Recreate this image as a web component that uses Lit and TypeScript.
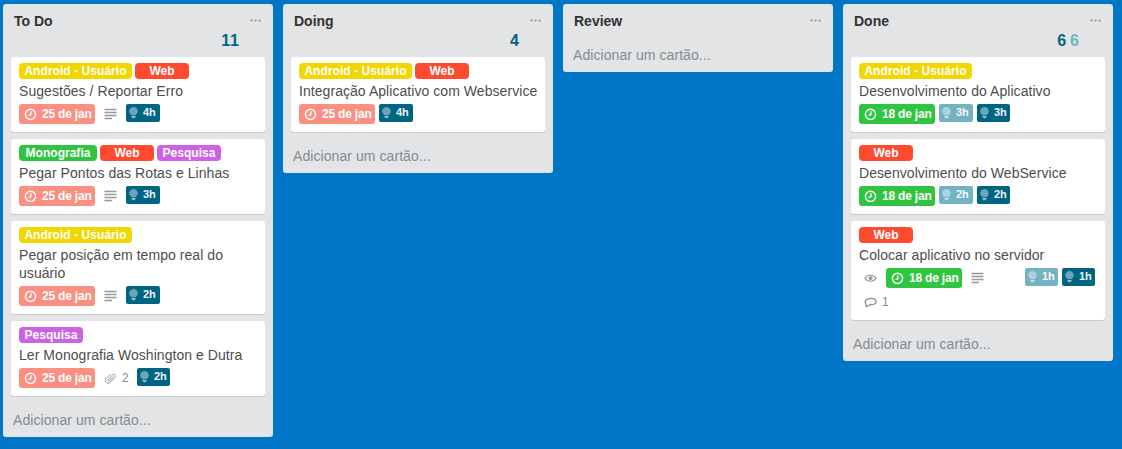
import { LitElement, html, css, svg, nothing } from "lit";
import { customElement, property } from "lit/decorators.js";

type Badge = { kind: "due" | "done" | "desc" | "eye" | "clip" | "comment" | "est" | "spent"; text?: string; push?: boolean };
type Card = { labels: string[]; title: string; badges: Badge[]; more?: Badge[] };
type List = { name: string; spent?: string; est?: string; cards: Card[] };

const LABELS: Record<string, string> = {
  "Android - Usuário": "android",
  Web: "web",
  Monografia: "mono",
  Pesquisa: "pesq",
};

const due: Badge = { kind: "due", text: "25 de jan" };
const done: Badge = { kind: "done", text: "18 de jan" };
const desc: Badge = { kind: "desc" };
const spent = (text: string): Badge => ({ kind: "spent", text });
const est = (text: string, push = false): Badge => ({ kind: "est", text, push });

const LISTS: List[] = [
  {
    name: "To Do",
    spent: "11",
    cards: [
      { labels: ["Android - Usuário", "Web"], title: "Sugestões / Reportar Erro", badges: [due, desc, spent("4h")] },
      { labels: ["Monografia", "Web", "Pesquisa"], title: "Pegar Pontos das Rotas e Linhas", badges: [due, desc, spent("3h")] },
      { labels: ["Android - Usuário"], title: "Pegar posição em tempo real do usuário", badges: [due, desc, spent("2h")] },
      { labels: ["Pesquisa"], title: "Ler Monografia Woshington e Dutra", badges: [due, { kind: "clip", text: "2" }, spent("2h")] },
    ],
  },
  {
    name: "Doing",
    spent: "4",
    cards: [{ labels: ["Android - Usuário", "Web"], title: "Integração Aplicativo com Webservice", badges: [due, spent("4h")] }],
  },
  { name: "Review", cards: [] },
  {
    name: "Done",
    spent: "6",
    est: "6",
    cards: [
      { labels: ["Android - Usuário"], title: "Desenvolvimento do Aplicativo", badges: [done, est("3h"), spent("3h")] },
      { labels: ["Web"], title: "Desenvolvimento do WebService", badges: [done, est("2h"), spent("2h")] },
      {
        labels: ["Web"],
        title: "Colocar aplicativo no servidor",
        badges: [{ kind: "eye" }, done, desc, est("1h", true), spent("1h")],
        more: [{ kind: "comment", text: "1" }],
      },
    ],
  },
];

const clock = svg`<circle cx="6.5" cy="6.3" r="5.1" fill="none" stroke="currentColor" stroke-width="1.5"/><path d="M6.9 3.2V6.7L4.5 7.5" fill="none" stroke="currentColor" stroke-width="1.3"/>`;
const lines = svg`<path d="M.5 1.5H12.5M.5 4.5H12.5M.5 7.5H12.5M.5 10.5H8" stroke="currentColor" stroke-width="1.3"/>`;
const eye = svg`<path d="M.9 6.3C3.4 2.2 9.6 2.2 12.1 6.3C9.6 10.2 3.4 10.2 .9 6.3Z" fill="none" stroke="currentColor" stroke-width="1.2"/><circle cx="6.5" cy="6.2" r="1.9" fill="currentColor"/>`;
const bubble = svg`<path d="M2 10.7C2.7 9.9 2.7 9.2 2.1 8.4C-.2 5.4 2.2 2.5 6.8 2.4C10.2 2.4 12.2 3.6 12.1 5.5C12 7.6 9.8 8.7 7 8.7C5.2 8.7 4.4 10.2 2 10.7Z" fill="none" stroke="currentColor" stroke-width="1.3" stroke-linejoin="round"/>`;
const clip = svg`<path d="M9.1 4.9L5.6 8.6C4.6 9.5 3.4 8.5 4.3 7.4L8.2 3.2C10.2 1.2 12.8 3.2 11 5.5L6.6 10.1C3.5 12.9 -.4 9.8 2.1 6.6L6.2 2.3" fill="none" stroke="currentColor" stroke-width=".95" stroke-linecap="round"/>`;

@customElement("hour-badge")
export class HourBadge extends LitElement {
  @property() hours = "";
  static styles = css`
    :host { display: flex; align-items: center; box-sizing: border-box; height: 18px; width: 34px; padding: 0 0 1px 3px; border-radius: 2px; color: #fff; background: #006582; }
    svg { width: 9px; height: 12px; flex: none; }
    span { font: bold 11px/17px "Liberation Sans", Arial, sans-serif; margin-left: 5px; opacity: .93; }
  `;
  render() {
    return html`<svg viewBox="0 0 9 12"><path d="M4.5 0A4.2 4.2 0 0 1 7.4 7.3L6.5 8.3H2.5L1.6 7.3A4.2 4.2 0 0 1 4.5 0Z" fill="#fff" opacity=".42"/><path d="M2 9.1H7L5.8 10.9Q4.5 11.8 3.2 10.9Z" fill="#fff" opacity=".58"/></svg><span>${this.hours}</span>`;
  }
}

@customElement("board-card")
export class BoardCard extends LitElement {
  @property({ attribute: false }) card!: Card;
  static styles = css`
    :host { display: block; box-sizing: border-box; padding: 6px 6px 8px 8px; background: #fff; border-radius: 3px; box-shadow: 0 1px 0 #c8cacb; }
    .labels { display: flex; gap: 3px; height: 16px; }
    .label { box-sizing: border-box; border-radius: 4px; color: #fff; font-size: 12px; font-weight: bold; line-height: 16px; text-align: center; white-space: nowrap; letter-spacing: .02px; }
    .android { width: 113px; background: #f2d600; letter-spacing: -.02px; }
    .android { letter-spacing: .05px; }
    .web { width: 54px; background: #ff4a30; }
    .mono { width: 78px; background: #30c540; }
    .pesq { width: 64px; background: #cd62e4; }
    .title { margin: 3px -2px 4px 0; font-size: 14px; line-height: 18px; color: #4d4d4d; letter-spacing: .055px; }
    .row { display: flex; gap: 4px; }
    .row + .row { margin-top: 4px; }
    .badge { display: flex; align-items: center; height: 20px; box-sizing: border-box; color: #999; font-size: 12px; }
    .badge svg { width: 13px; height: 13px; flex: none; }
    .due, .done { width: 76px; padding-left: 5px; gap: 5px; border-radius: 3px; color: #fff; font-weight: bold; white-space: nowrap; letter-spacing: -.2px; }
    .due { background: #fa8f82; }
    .done { background: #30c540; }
    .desc { width: 23px; padding-left: 5px; }
    .eye { width: 23px; padding-left: 5px; }
    .clip, .comment { width: 34px; padding-left: 5px; gap: 5px; color: #8c8c8c; }
    .est { background: #73b2c3; }
    .narrow { width: 33px; }
    .push { margin-left: auto; }
    .end { margin-right: 4px; }
  `;

  badge(b: Badge, i: number, all: Badge[]) {
    if (b.kind === "est" || b.kind === "spent") {
      const narrow = b.text === "1h" || (b.kind === "spent" && i > 0 && all[i - 1].text !== undefined && all[i - 1].kind !== "due");
      const cls = `${b.kind} ${narrow ? "narrow" : ""} ${b.push ? "push" : ""} ${b.text === "1h" && !b.push ? "end" : ""}`;
      return html`<hour-badge class=${cls} .hours=${b.text ?? ""}></hour-badge>`;
    }
    const icon = { due: clock, done: clock, desc: lines, eye, clip, comment: bubble }[b.kind];
    return html`<div class="badge ${b.kind}"><svg viewBox="0 0 13 13">${icon}</svg>${b.text ? html`<span>${b.text}</span>` : nothing}</div>`;
  }

  render() {
    const c = this.card;
    return html`
      <div class="labels">${c.labels.map((l) => html`<span class="label ${LABELS[l]}">${l}</span>`)}</div>
      <div class="title">${c.title}</div>
      <div class="row">${c.badges.map((b, i, a) => this.badge(b, i, a))}</div>
      ${c.more ? html`<div class="row">${c.more.map((b, i, a) => this.badge(b, i, a))}</div>` : nothing}
    `;
  }
}

@customElement("board-list")
export class BoardList extends LitElement {
  @property({ attribute: false }) list!: List;
  static styles = css`
    :host { display: flex; flex-direction: column; box-sizing: border-box; width: 270px; flex: none; padding: 0 8px; background: #e2e4e6; border-radius: 3px; }
    .head { display: flex; justify-content: space-between; padding: 8px 4px 0 3px; height: 18px; }
    .name { font-size: 14px; font-weight: bold; line-height: 18px; color: #333; }
    .menu { width: 11px; height: 3px; margin-top: 7px; }
    .totals { display: flex; justify-content: flex-end; gap: 4px; height: 20px; margin-bottom: 7px; padding-right: 26px; font-size: 16px; font-weight: bold; line-height: 22px; font-kerning: none; }
    .spent { color: #006582; }
    .est { color: #73b2c3; }
    .cards { display: flex; flex-direction: column; gap: 7px; }
    .add { height: 18px; margin-top: 15px; margin-bottom: 8px; padding-left: 2px; font-size: 14px; line-height: 18px; color: #838c91; letter-spacing: .07px; }
    .empty { margin-top: 16px; }
  `;
  render() {
    const l = this.list;
    return html`
      <div class="head">
        <span class="name">${l.name}</span>
        <svg class="menu" viewBox="0 0 11 3"><g fill="#a2a4a6"><circle cx="1.5" cy="1.5" r="1.2"/><circle cx="5.5" cy="1.5" r="1.2"/><circle cx="9.5" cy="1.5" r="1.2"/></g></svg>
      </div>
      ${l.spent ? html`<div class="totals"><span class="spent">${l.spent}</span>${l.est ? html`<span class="est">${l.est}</span>` : nothing}</div>` : nothing}
      <div class="cards">${l.cards.map((c) => html`<board-card .card=${c}></board-card>`)}</div>
      <div class="add ${l.cards.length ? "" : "empty"}">Adicionar um cartão...</div>
    `;
  }
}

@customElement("app-root")
export class AppRoot extends LitElement {
  static styles = css`
    :host { display: flex; align-items: flex-start; gap: 10px; box-sizing: border-box; height: 449px; padding: 4px 3px; overflow: hidden; background: #0076c6; font-family: "Liberation Sans", Arial, Helvetica, sans-serif; }
  `;
  render() {
    return LISTS.map((l) => html`<board-list .list=${l}></board-list>`);
  }
}
